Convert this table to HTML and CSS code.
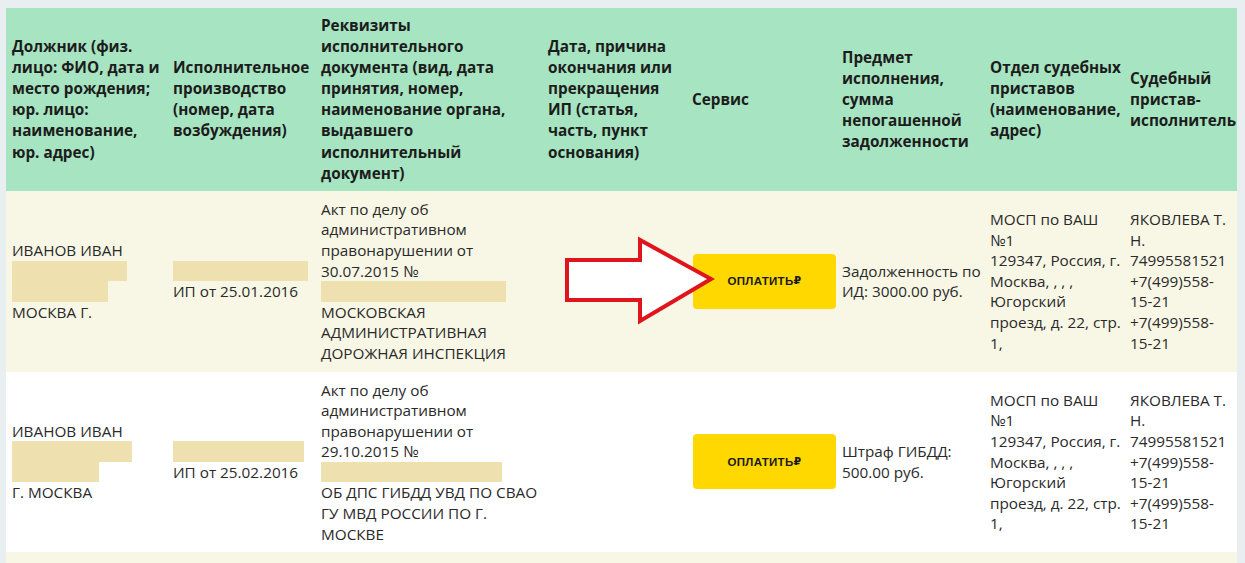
FILE: index.html
```html
<!DOCTYPE html>
<html lang="ru">
<head>
<meta charset="utf-8">
<title>Исполнительные производства</title>
<link rel="stylesheet" href="styles.css">
</head>
<body>
<div class="page">
  <table class="debts">
    <colgroup>
      <col class="c-debtor">
      <col class="c-case">
      <col class="c-doc">
      <col class="c-end">
      <col class="c-service">
      <col class="c-subject">
      <col class="c-dept">
      <col class="c-bailiff">
    </colgroup>
    <thead>
      <tr>
        <th>Должник (физ. лицо: ФИО, дата и место рождения; юр. лицо: наименование, юр. адрес)</th>
        <th>Исполнительное производство (номер, дата возбуждения)</th>
        <th>Реквизиты исполнительного документа (вид, дата принятия, номер, наименование органа, выдавшего исполнительный документ)</th>
        <th>Дата, причина окончания или прекращения ИП (статья, часть, пункт основания)</th>
        <th>Сервис</th>
        <th>Предмет исполнения, сумма непогашенной задолженности</th>
        <th>Отдел судебных приставов (наименование, адрес)</th>
        <th>Судебный пристав-исполнитель</th>
      </tr>
    </thead>
    <tbody>
      <tr class="odd">
        <td>ИВАНОВ ИВАН<span class="redact w115"></span><span class="redact w96"></span>МОСКВА Г.</td>
        <td><span class="redact w135"></span>ИП от 25.01.2016</td>
        <td>Акт по делу об административном правонарушении от 30.07.2015 №<span class="redact w185"></span>МОСКОВСКАЯ АДМИНИСТРАТИВНАЯ ДОРОЖНАЯ ИНСПЕКЦИЯ</td>
        <td></td>
        <td><a class="pay-btn" href="#">ОПЛАТИТЬ<span class="rub">₽</span></a></td>
        <td>Задолженность по ИД: 3000.00 руб.</td>
        <td>МОСП по ВАШ №1<br>129347, Россия, г. Москва, , , , Югорский проезд, д. 22, стр. 1,</td>
        <td>ЯКОВЛЕВА Т. Н.<br>74995581521<br>+7(499)558-<span class="nowrap">15-21</span><br>+7(499)558-<span class="nowrap">15-21</span></td>
      </tr>
      <tr class="even">
        <td>ИВАНОВ ИВАН<span class="redact w120"></span><span class="redact w87"></span>Г. МОСКВА</td>
        <td><span class="redact w131"></span>ИП от 25.02.2016</td>
        <td>Акт по делу об административном правонарушении от 29.10.2015 №<span class="redact w181"></span>ОБ ДПС ГИБДД УВД ПО СВАО ГУ МВД РОССИИ ПО Г. МОСКВЕ</td>
        <td></td>
        <td><a class="pay-btn" href="#">ОПЛАТИТЬ<span class="rub">₽</span></a></td>
        <td>Штраф ГИБДД: 500.00 руб.</td>
        <td>МОСП по ВАШ №1<br>129347, Россия, г. Москва, , , , Югорский проезд, д. 22, стр. 1,</td>
        <td>ЯКОВЛЕВА Т. Н.<br>74995581521<br>+7(499)558-<span class="nowrap">15-21</span><br>+7(499)558-<span class="nowrap">15-21</span></td>
      </tr>
      <tr class="odd">
        <td class="spacer"></td>
        <td></td>
        <td></td>
        <td></td>
        <td></td>
        <td></td>
        <td></td>
        <td></td>
      </tr>
    </tbody>
  </table>
  <svg class="arrow" width="152" height="90" viewBox="0 0 152 90" aria-hidden="true">
    <path d="M3 24 H76 V4 L147 43 L76 85 V64 H3 Z" fill="#fff" stroke="#e0141c" stroke-width="4" stroke-linejoin="miter"/>
  </svg>
</div>
</body>
</html>
```
FILE: styles.css
```css
html, body {
  margin: 0;
  padding: 0;
}

body {
  background: #e9eef0;
  font-family: "Open Sans", "Noto Sans", sans-serif;
  color: #2b2b2b;
}

.page {
  position: relative;
  padding: 8px 8px 0 6px;
}

.debts {
  border-collapse: collapse;
  border-spacing: 0;
  table-layout: fixed;
  width: 1231px;
}

.c-debtor { width: 161px; }
.c-case { width: 148px; }
.c-doc { width: 227px; }
.c-end { width: 144px; }
.c-service { width: 150px; }
.c-subject { width: 148px; }
.c-dept { width: 140px; }
.c-bailiff { width: 113px; }

.debts th {
  background: #a7e4c1;
  color: #1c1c1c;
  font-size: 15.3px;
  font-weight: 700;
  line-height: 21.1px;
  text-align: left;
  vertical-align: middle;
  padding: 7px 3px 7px 6px;
}

.debts td {
  font-size: 15.3px;
  font-weight: 400;
  line-height: 20.6px;
  color: #2a2a2a;
  vertical-align: middle;
  padding: 8px 0 8px 6px;
}

.debts td.spacer {
  height: 40px;
}

.debts tr.odd td {
  background: #f8f7e5;
}

.debts tr.even td {
  background: #ffffff;
}

.nowrap {
  white-space: nowrap;
}

.redact {
  display: block;
  height: 20.6px;
  background: #eee0af;
}

.w87 { width: 87px; }
.w96 { width: 96px; }
.w115 { width: 115px; }
.w120 { width: 120px; }
.w131 { width: 131px; }
.w135 { width: 135px; }
.w181 { width: 181px; }
.w185 { width: 185px; }

.pay-btn {
  display: flex;
  align-items: center;
  justify-content: center;
  width: 143px;
  height: 55px;
  margin-left: 1px;
  border-radius: 4px;
  background: #ffd800;
  color: #1a1a1a;
  text-decoration: none;
  font-family: "Liberation Sans", Arial, sans-serif;
  font-size: 11.5px;
  font-weight: 700;
  letter-spacing: 0.3px;
}

.rub {
  font-family: "DejaVu Sans", sans-serif;
  font-weight: 700;
  font-size: 11px;
}

.arrow {
  position: absolute;
  left: 564px;
  top: 236px;
}
```
